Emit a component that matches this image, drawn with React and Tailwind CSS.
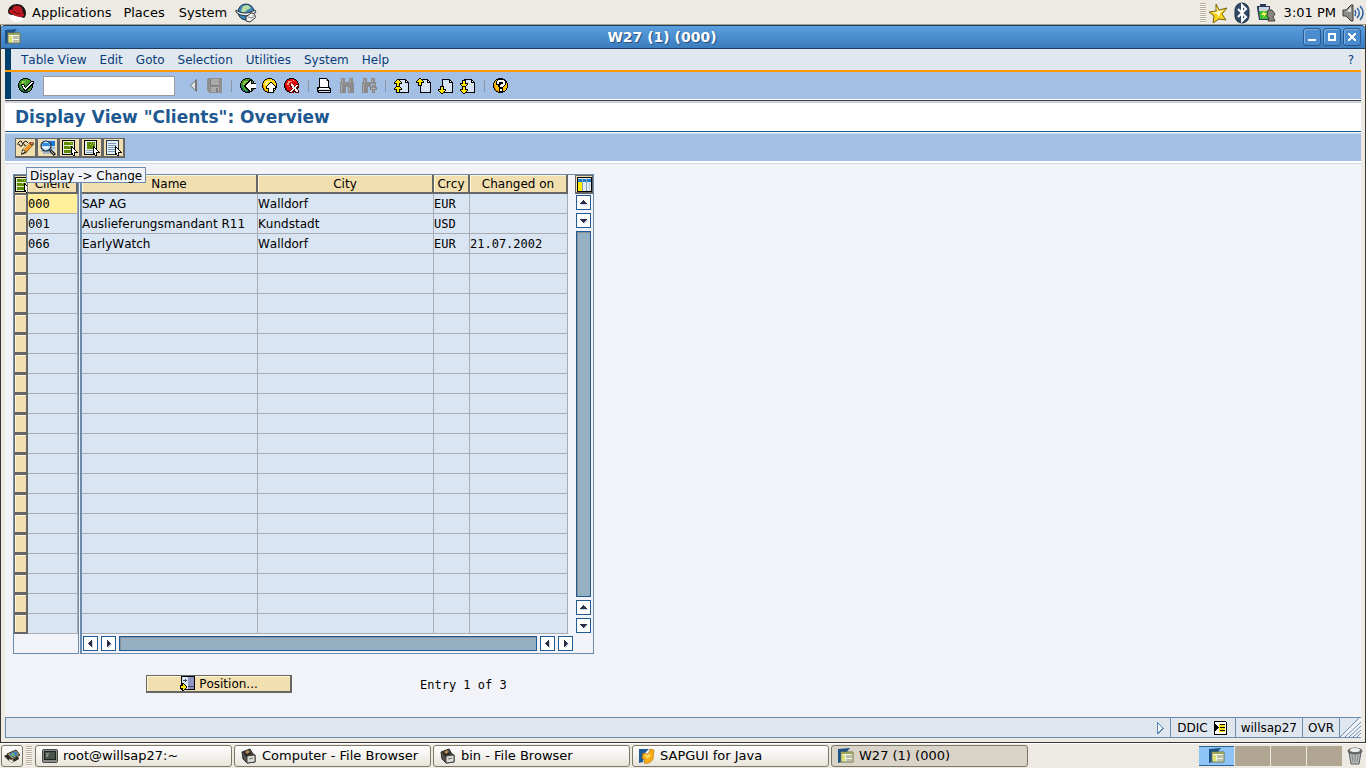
import React from "react";

const clients = [
  { client: "000", name: "SAP AG", city: "Walldorf", crcy: "EUR", changed: "" },
  { client: "001", name: "Auslieferungsmandant R11", city: "Kundstadt", crcy: "USD", changed: "" },
  { client: "066", name: "EarlyWatch", city: "Walldorf", crcy: "EUR", changed: "21.07.2002" },
];

const ROW_COUNT = 22;
const rows = Array.from({ length: ROW_COUNT }, (_, i) => clients[i] || null);

const menus = ["Table View", "Edit", "Goto", "Selection", "Utilities", "System", "Help"];

// Small pixel style drawing, one unit per pixel
const Pix = ({ w = 16, h = 16, children }) => (
  <svg
    width={w}
    height={h}
    viewBox={`0 0 ${w} ${h}`}
    shapeRendering="crispEdges"
    className="shrink-0"
    aria-hidden="true"
  >
    {children}
  </svg>
);

/* ---------- toolbar icons ---------- */

const Ball = ({ fill, shade, light }) => (
  <>
    <path d="M5 0h5v1h2v1h1v1h1v2h1v5h-1v2h-1v1h-1v1h-2v1H5v-1H3v-1H2v-1H1v-2H0V5h1V3h1V2h1V1h2z" fill="#000" />
    <path d="M5 1h5v1h2v1h1v2h1v5h-1v2h-1v1h-2v1H5v-1H3v-1H2v-2H1V5h1V3h1V2h2z" fill={fill} />
    <path d="M1 7h1v3h1v2h2v1h5v1H5v-1H3v-1H2v-2H1z" fill={shade} />
    <path d="M4 3h4v1H6v1H5v2H3V5h1zM9 2h1v1H9zM7 5h1v1H7zM5 8h1v1H5z" fill={light} />
  </>
);

const OkIcon = () => (
  <Pix>
    <Ball fill="#3c9a28" shade="#0b5a50" light="#a5cf4a" />
    <path d="M3 6h3v1h1v2h1V8h1V7h1V6h1V5h1V4h1V3h3v3h-1v1h-1v1h-1v1h-1v1h-1v1h-1v1H9v1H6v-1H5v-2H4V8H3z" fill="#000" />
    <path d="M4 7h2v2h1v1h1V9h1V8h1V7h1V6h1V5h1V4h2v1h-1v1h-1v1h-1v1h-1v1h-1v1H9v1H8v1H7v-1H6v-1H5V8H4z" fill="#fff" />
  </Pix>
);

const BackIcon = () => (
  <Pix>
    <Ball fill="#3c9a28" shade="#14587a" light="#9cc84a" />
    <path d="M9 2h3v3h4v6h-4v3H9v-1H8v-1H7v-1H6v-1H5V9H4V7h1V6h1V5h1V4h1V3h1z" fill="#000" />
    <path d="M10 3h1v3h5v4h-5v3h-1v-1H9v-1H8v-1H7V9H6V8H5h1V7h1V6h1V5h1V4h1z" fill="#fff" />
  </Pix>
);

const ExitIcon = () => (
  <Pix>
    <Ball fill="#ffd400" shade="#e88a00" light="#fff6a8" />
    <path d="M8 4h2v1h1v1h1v1h1v1h1v3h-2v4H6v-4H4V8h1V7h1V6h1V5h1z" fill="#000" />
    <path d="M8 5h2v1h1v1h1v1h1v2h-2v4H7v-4H5V8h1V7h1V6h1z" fill="#fff" />
  </Pix>
);

const CancelIcon = () => (
  <Pix>
    <Ball fill="#e30b0b" shade="#8c0000" light="#ff9c86" />
    <path d="M6 6h4v2h2V6h3v3h-1v1h-1v1h1v1h1v3h-4v-2h-1v2H6v-3h1v-1h1v-1H7V9H6z" fill="#6d0000" />
    <path d="M7 6h2v1h1v2h1V8h1V7h2v1h-1v1h-1v2h1v1h1v2h-2v-1h-1v-2h-1v1H9v1H8v1H6v-1h1v-1h1v-1h1v-1H8V8H7z" fill="#fff" />
  </Pix>
);

const HelpIcon = () => (
  <Pix>
    <Ball fill="#ffc400" shade="#e07800" light="#fff090" />
    <path d="M5 1h6v1h1v1h1v4h-1v1h-1v1h-1v5H6V9H5V7H3V3h1V2h1z" fill="#000" />
    <path d="M5 2h6v1h1v4h-1v1h-1v1H7V7h1V6h2V4H6v2H4V3h1zM7 11h2v2H7z" fill="#fff" />
  </Pix>
);

const SaveIcon = () => (
  <Pix>
    <path d="M1 0h14v15H2v-1H1v-1H0V1h1z" fill="#8f8f8f" />
    <path d="M3 1h9v6H3zM4 9h8v5H4z" fill="#a9a9a9" />
    <path d="M3 7h9v1H3zM9 10h2v4H9zM3 1h1v6H3z" fill="#7d7d7d" />
  </Pix>
);

const PrintIcon = () => (
  <Pix>
    <path d="M2 0h8v1h1v1h1v7h1v1h1v5H1v-1H0V9h2z" fill="#000" />
    <path d="M3 1h6v2h2v6H3zM2 10h10v1H2z" fill="#fff" />
    <path d="M1 11h12v1H1zM2 13h11v1H2z" fill="#d5e1f1" />
    <path d="M9 1h1v2H9z" fill="#9db6d0" />
  </Pix>
);

const FindIcon = ({ plus }) => (
  <Pix>
    <path d="M2 0h4v4h4V0h4v4h1v11H9V9H7v6H1V4h1z" fill="#8c8c8c" />
    <path d="M3 1h1v4H3zM11 1h1v4h-1zM2 6h1v8H2zM10 10h1v4h-1z" fill="#a9a9a9" />
    {plus && <path d="M10 6h4v3h2v7H8V9h2z" fill="#a4bfe4" />}
    {plus && <path d="M11 7h3v2h2v3h-2v3h-3v-3H9V9h2z" fill="#858585" />}
    {plus && <path d="M12 8h1v2h2v1h-2v3h-1v-3h-2v-1h2z" fill="#a9a9a9" />}
  </Pix>
);

const Arrow = ({ x, y, down }) => (
  <g transform={`translate(${x} ${y})${down ? " translate(0 8) scale(1 -1)" : ""}`}>
    <path d="M3 0h2v1h1v1h1v1h1v2H6v3H2V5H0V3h1V2h1V1h1z" fill="#000" />
    <path d="M3 1h2v1h1v1h1v1H5v3H3V4H1V3h1V2h1z" fill="#ffe500" />
  </g>
);

const PageIcon = ({ arrows }) => (
  <Pix>
    <path d="M4 1h8v1h1v1h1v1h1v11H4z" fill="#000" />
    <path d="M5 2h6v3h3v9H5z" fill="#d5e3f4" />
    <path d="M12 3h1v1h-1z" fill="#fff" />
    {arrows.map(([x, y, down], i) => (
      <Arrow key={i} x={x} y={y} down={down} />
    ))}
  </Pix>
);

/* ---------- application toolbar icons ---------- */

const ToggleIcon = () => (
  <svg width="18" height="17" viewBox="0 0 18 17" className="shrink-0" aria-hidden="true">
    <path d="M1 6V4l2-2h1l2 3 1-2 2-1 2 2M2 5l1 2h2l1-2M7 5l1 2h2" fill="none" stroke="#1c1c1c" />
    <path d="M4 16l1-5 8-8h3l1 2-8 9z" fill="#2c2214" />
    <path d="M7 11l6-6 2 2-6 6z" fill="#f5971e" />
    <path d="M6 10l6-6 1 1-6 6z" fill="#ffd27a" />
    <path d="M13 4l1-1h1l1 1v1l-1 1z" fill="#e8705c" />
    <path d="M5 14l1-3 2 2z" fill="#fff" />
  </svg>
);

const DetailIcon = () => (
  <svg width="18" height="17" viewBox="0 0 18 17" className="shrink-0" aria-hidden="true">
    <path d="M4 1h12v13H4z" fill="#d3e2f0" />
    <path d="M4 2h12v5H4z" fill="#1f78d8" />
    <path d="M9 9h7M2 12h10M4 14h12" stroke="#6f8fb0" />
    <circle cx="7" cy="7" r="5" fill="#c3e3f5" stroke="#1c2a3a" strokeWidth="1.2" />
    <path d="M4 4h6l1 3H3z" fill="#2f8be0" />
    <path d="M4 8h5v1H4z" fill="#fff" />
    <path d="M11 11l5 5" stroke="#1c2a3a" strokeWidth="3" />
    <path d="M12 12l3 3" stroke="#e7a45a" />
  </svg>
);

const Cursor = () => (
  <>
    <path d="M9 6h1v1h1v1h1v1h1v1h1v1h1v1h1v1h-3v3h-2v-2h-1v1H9z" fill="#000" />
    <path d="M10 8h1v1h1v1h1v1h1v1h-2v3h-1v-2h-1z" fill="#fff" />
  </>
);

const SelectAllIcon = () => (
  <Pix>
    <path d="M0 0h13v15H0z" fill="#000" />
    <path d="M1 1h11v13H1z" fill="#e8efd8" />
    <path d="M2 2h9v3H2zM2 6h9v3H2zM2 10h9v3H2z" fill="#5c8a00" />
    <path d="M7 2h1v1H7zM9 3h1v1H9zM7 6h1v1H7zM9 7h1v1H9z" fill="#b5d44a" />
    <Cursor />
  </Pix>
);

const SelectBlockIcon = () => (
  <Pix>
    <path d="M0 0h13v15H0z" fill="#000" />
    <path d="M1 1h11v13H1z" fill="#e4ecf4" />
    <path d="M3 2h8v7H3z" fill="#5c8a00" />
    <path d="M7 2h1v1H7zM9 3h1v1H9zM8 5h1v1H8zM6 4h1v1H6z" fill="#b5d44a" />
    <path d="M2 10h7v1H2zM2 12h7v1H2z" fill="#8ba3ba" />
    <Cursor />
  </Pix>
);

const DeselectIcon = () => (
  <Pix>
    <path d="M0 0h13v15H0z" fill="#26384a" />
    <path d="M1 1h11v13H1z" fill="#e4eef8" />
    <path d="M2 3h8v1H2zM2 5h8v1H2zM2 7h7v1H2zM2 9h7v1H2zM2 11h7v1H2z" fill="#7d98b4" />
    <Cursor />
  </Pix>
);

const TableConfigIcon = () => (
  <Pix w={15} h={15}>
    <path d="M0 0h15v15H0z" fill="#000" />
    <path d="M1 1h13v13H1z" fill="#e4ecf4" />
    <path d="M1 2h13v3H1z" fill="#1f7fc9" />
    <path d="M1 5h4v9H1z" fill="#ffea00" />
    <path d="M5 2h1v12H5zM9 2h1v12H9z" fill="#8ba3ba" />
    <path d="M12 5h1v9h-1z" fill="#b7c4d2" />
  </Pix>
);

const PositionIcon = () => (
  <Pix>
    <path d="M2 0h14v14H2z" fill="#000" />
    <path d="M3 1h6v12H3z" fill="#dbe7f6" />
    <path d="M9 1h6v12H9z" fill="#8f93c6" />
    <path d="M4 4h4v1H4zM6 3h1v3H6zM9 10h6v1H9z" fill="#3a4a5a" />
    <path d="M3 7h2v1h1v1h1v1h1v2H7v1H6v1H5v1H3v-2H1V9h2z" fill="#000" />
    <path d="M4 8h1v1h1v1h1v2H6v1H5v1H4v-2H2v-2h2z" fill="#ffe500" />
  </Pix>
);

/* ---------- desktop icons ---------- */

const HatIcon = () => (
  <svg width="20" height="20" viewBox="0 0 20 20" className="shrink-0" aria-hidden="true">
    <circle cx="10" cy="10" r="9" fill="#fff" />
    <path d="M1 9c0-5 4-8 9-8s9 4 9 9c0 3-1 4-2 5L6 12c-3 0-5-1-5-3z" fill="#1d1414" />
    <path d="M6 5c1-3 3-2 5-2 2 0 4 1 4 3l1 4c2 1 1 4-2 4-3 0-6-1-9-3-3-1-4-3-2-4 1-1 3 0 3-2z" fill="#c01822" />
    <path d="M5 7c3 3 7 4 10 3-2 2-8 1-10-3z" fill="#3c0509" />
    <path d="M2 13c3 0 5 1 8 3l5 1c-4 3-11 2-13-4z" fill="#fff" />
  </svg>
);

const GlobeIcon = () => (
  <svg width="22" height="20" viewBox="0 0 22 20" className="shrink-0" aria-hidden="true">
    <circle cx="11" cy="9" r="8" fill="#3c86b8" stroke="#1c3550" />
    <path d="M8 3l5-1 3 3-4 2-3 3-3-2z" fill="#b9dca0" />
    <path d="M1 7c5 4 13 4 19 0l1 2c-6 5-15 5-20 0z" fill="#e9eef2" stroke="#26323e" />
    <path d="M11 14l5-4c3 0 5 2 4 5l-5 4-4-1z" fill="#f0f0ee" stroke="#333" />
    <path d="M13 14l4 1 2-3" fill="none" stroke="#888" />
  </svg>
);

const StarIcon = () => (
  <svg width="20" height="20" viewBox="0 0 20 20" className="shrink-0" aria-hidden="true">
    <path d="M8 1l3 6 8-2-5 6 4 6-7-1-6 4 1-7-5-4 7-1z" fill="#f8d21c" stroke="#7b6416" strokeLinejoin="round" />
    <path d="M8 4l2 5-6 0 5 2 2 3 1-4 4-3-5 1z" fill="#fffbd0" />
  </svg>
);

const BluetoothIcon = () => (
  <svg width="16" height="22" viewBox="0 0 16 22" className="shrink-0" aria-hidden="true">
    <rect x="1" y="1" width="14" height="20" rx="7" fill="#2f4a68" stroke="#1b2b3d" />
    <path d="M4 7l8 8-4 4V3l4 4-8 8" fill="none" stroke="#fff" strokeWidth="2" />
  </svg>
);

const BatteryIcon = () => (
  <svg width="20" height="18" viewBox="0 0 20 18" className="shrink-0" aria-hidden="true">
    <path d="M1 2h3V0h6v2h4v2l-1 12H3L1 4z" fill="#2b3a5c" />
    <path d="M3 5h10l-1 10H4z" fill="#3fbf2c" />
    <path d="M3 3h10v4H3z" fill="#c9d4dc" />
    <path d="M9 6l-4 5h3l-1 3 4-5H8z" fill="#fff36a" />
    <path d="M12 6h4l3 4-2 3 2 4h-7l1-3-2-2z" fill="#8a857c" stroke="#45413b" />
  </svg>
);

const SpeakerIcon = () => (
  <svg width="22" height="18" viewBox="0 0 22 18" className="shrink-0" aria-hidden="true">
    <path d="M1 6h3l5-5h2v16H9l-5-5H1z" fill="#8d8d8a" stroke="#3a3a38" />
    <path d="M3 7h2l4-4v5z" fill="#e2e2df" />
    <path d="M13 6c1 2 1 4 0 6M15 4c3 3 3 7 0 10M18 2c4 4 4 10 0 14" fill="none" stroke="#2f62a5" strokeWidth="1.5" />
  </svg>
);

const SapWindowIcon = () => (
  <svg width="16" height="16" viewBox="0 0 16 16" className="shrink-0" aria-hidden="true">
    <path d="M0 1l12-1-4 5-4 9-4 1z" fill="#1d5287" />
    <path d="M3 4h12v10H3z" fill="#f2f4e4" stroke="#6a7140" />
    <path d="M3 4h12v2H3z" fill="#9aa35a" />
    <path d="M4 7h3v6H4z" fill="#dde36b" />
    <path d="M8 7h6v3H8zM8 11h6v2H8z" fill="#b8c0a8" />
  </svg>
);

const SapGuiIcon = () => (
  <svg width="16" height="16" viewBox="0 0 16 16" className="shrink-0" aria-hidden="true">
    <path d="M0 1h10L6 5l-2 9-4 1z" fill="#1d5a96" />
    <path d="M4 5l4 1 2-1 1-4 4 1-1 9c-2 4-6 5-9 4l1-3-3-2z" fill="#f9ad13" stroke="#b06c00" strokeWidth="0.6" />
    <path d="M5 6l3 1 3-1 1 2-4 3z" fill="#ffd762" />
  </svg>
);

const TerminalIcon = () => (
  <svg width="16" height="16" viewBox="0 0 16 16" className="shrink-0" aria-hidden="true">
    <rect x="0.5" y="1.5" width="15" height="13" rx="1" fill="#8a8c84" stroke="#4a4b46" />
    <rect x="2.5" y="3.5" width="11" height="8" fill="#4a534a" stroke="#1d211d" />
    <path d="M4 6h3M4 8h2" stroke="#b5c2ae" />
  </svg>
);

const CabinetIcon = () => (
  <svg width="16" height="16" viewBox="0 0 16 16" className="shrink-0" aria-hidden="true">
    <path d="M1 4l8-3 3 5 2 1v7l-8 1-4-4z" fill="#55544f" stroke="#2c2c2a" />
    <path d="M2 4l6-2 3 4-6 3z" fill="#2c2721" />
    <path d="M4 4l3-2 2 2-3 2z" fill="#b08950" />
    <path d="M6 8l8-1v7l-8 1z" fill="#deded9" stroke="#44443f" />
    <path d="M8 11l4-1" stroke="#666" />
  </svg>
);

const DesktopIcon = () => (
  <svg width="16" height="16" viewBox="0 0 16 16" className="shrink-0" aria-hidden="true">
    <path d="M0 8l4-2 4 6 6-4 1 3-7 4-3-2z" fill="#2d2b26" />
    <path d="M3 6l9-4 4 5-8 4z" fill="#a69660" stroke="#38331f" />
    <path d="M5 6l7-3 2 4-6 2z" fill="#3b7fc2" />
    <path d="M7 6l3-1 1 2-3 1z" fill="#6fc070" />
    <path d="M5 11l5 2-2 2-3-2z" fill="#e8e4d8" />
  </svg>
);

const TrashIcon = () => (
  <svg width="16" height="18" viewBox="0 0 16 18" className="shrink-0" aria-hidden="true">
    <path d="M2 5h12l-2 12H4z" fill="#b9bcba" stroke="#5a5d5b" />
    <ellipse cx="8" cy="4" rx="7" ry="3" fill="#6b6f6d" stroke="#555856" />
    <ellipse cx="8" cy="3" rx="5" ry="2" fill="#ecefed" />
    <path d="M5 8l1 7M8 8v7M11 8l-1 7" stroke="#80838a" />
  </svg>
);

/* ---------- shared parts ---------- */

const ToolButton = ({ label, children }) => (
  <button type="button" aria-label={label} className="flex shrink-0 items-center justify-center">
    {children}
  </button>
);

const Sep = () => <span className="mx-0.5 h-3 w-px bg-[#8b97a6]" />;

const Grip = () => (
  <span className="h-5 w-1.5 shrink-0 bg-[repeating-linear-gradient(to_bottom,#b8b09c_0px,#b8b09c_1px,#f8f6f2_1px,#f8f6f2_2px)]" />
);

const arrowPaths = {
  up: "M4 2h1v1h1v1h1v1h1v1H1V5h1V4h1V3h1z",
  down: "M1 3h7v1H7v1H6v1H5v1H4V6H3V5H2V4H1z",
  left: "M2 4h1V3h1V2h1V1h1v7H5V7H4V6H3V5H2z",
  right: "M3 1h1v1h1v1h1v1h1v1H6v1H5v1H4v1H3z",
};

const ScrollButton = ({ dir }) => (
  <button
    type="button"
    aria-label={`Scroll ${dir}`}
    className="flex h-[15px] w-[15px] shrink-0 items-center justify-center border border-[#1f5a94] bg-white"
  >
    <Pix w={9} h={9}>
      <path d={arrowPaths[dir]} fill="#c5d6ea" transform="translate(1 1)" />
      <path d={arrowPaths[dir]} fill="#2b2f45" />
    </Pix>
  </button>
);

const HeadCell = ({ children }) => (
  <th
    scope="col"
    className="h-[19px] overflow-hidden border-r-2 border-b-2 border-[#666] bg-[#f2dfaf] pt-px pb-0 text-center font-normal leading-4 shadow-[inset_1px_1px_0_#fff8d8]"
  >
    {children}
  </th>
);

const Cell = ({ mono, selected, children }) => (
  <td
    className={`h-5 whitespace-nowrap border-r border-b border-[#a9adb3] p-0 leading-4 ${
      mono ? "font-['DejaVu_Sans_Mono',monospace]" : ""
    } ${selected ? "bg-[#ffee9a]" : "bg-[#d9e5f3]"}`}
  >
    {children}
  </td>
);

/* ---------- page sections ---------- */

const DesktopPanel = () => (
  <header className="flex h-[25px] items-center border-b border-[#a8a08c] bg-[#edeae3] pt-px text-[13px]">
    <nav className="flex items-center pl-[7px]">
      <button type="button" className="flex items-center gap-[5px]">
        <HatIcon />
        Applications
      </button>
      <button type="button" className="ml-3">Places</button>
      <button type="button" className="ml-[14px]">System</button>
      <button type="button" aria-label="Web browser" className="ml-2">
        <GlobeIcon />
      </button>
    </nav>
    <div className="ml-auto flex items-center gap-1.5 pr-0.5">
      <div className="flex items-center gap-0.5">
        <Grip />
        <StarIcon />
      </div>
      <BluetoothIcon />
      <BatteryIcon />
      <span className="pl-0.5">3:01 PM</span>
      <SpeakerIcon />
    </div>
  </header>
);

const WindowButton = ({ label, children }) => (
  <button
    type="button"
    aria-label={label}
    className="flex h-[18px] w-[18px] items-center justify-center rounded-[3px] border border-[#24588f] bg-[#4a8ccd] shadow-[inset_1px_1px_0_#7fb2e4]"
  >
    <Pix w={10} h={10}>{children}</Pix>
  </button>
);

const TitleBar = () => (
  <div className="flex h-6 items-center rounded-t-[4px] border-t border-b border-[#1c3d63] bg-linear-to-b from-[#5b9fdf] to-[#3b7cbd] px-1">
    <SapWindowIcon />
    <h1 className="flex-1 text-center text-[14px] leading-5 font-bold text-white [text-shadow:1px_1px_0_#24507e]">
      W27 (1) (000)
    </h1>
    <div className="flex gap-0.5">
      <WindowButton label="Minimize">
        <path d="M1 7h8v2H1z" fill="#fff" />
      </WindowButton>
      <WindowButton label="Maximize">
        <path d="M1 1h8v8H1zM3 3v4h4V3z" fill="#fff" fillRule="evenodd" />
      </WindowButton>
      <WindowButton label="Close">
        <path d="M1 1h2v1h1v1h2V2h1V1h2v2H8v1H7v2h1v1h1v2H7V8H6V7H4v1H3v1H1V7h1V6h1V4H2V3H1z" fill="#fff" />
      </WindowButton>
    </div>
  </div>
);

const MenuBar = () => (
  <nav className="flex h-[21px] items-center gap-[13px] bg-[#e0e7ee] pl-[10px] pr-[7px] text-[#0a3c7c]">
    {menus.map((m) => (
      <button key={m} type="button">{m}</button>
    ))}
    <button type="button" aria-label="Help on the application" className="ml-auto">?</button>
  </nav>
);

const StandardToolbar = () => (
  <div className="flex h-[27px] items-center gap-1.5 bg-[#a4bfe4] pl-[7px]">
    <ToolButton label="Enter"><OkIcon /></ToolButton>
    <input
      type="text"
      aria-label="Command"
      className="ml-[3px] h-5 w-[132px] border border-[#9a9a9a] bg-white px-1 outline-none"
    />
    <div className="ml-2 flex items-center gap-[10px]">
      <ToolButton label="Close command field">
        <Pix w={8} h={14}>
          <path d="M7 0v13h1V0zM6 1h1v11H6V11H5v-1H4V9H3V8H2V7H1V6h1V5h1V4h1V3h1V2h1z" fill="#777" />
          <path d="M6 3v7H5V9H4V8H3V7H2V6h1V5h1V4h1V3z" fill="#dfe3e8" />
        </Pix>
      </ToolButton>
      <ToolButton label="Save"><SaveIcon /></ToolButton>
    </div>
    <Sep />
    <ToolButton label="Back"><BackIcon /></ToolButton>
    <ToolButton label="Exit"><ExitIcon /></ToolButton>
    <ToolButton label="Cancel"><CancelIcon /></ToolButton>
    <Sep />
    <ToolButton label="Print"><PrintIcon /></ToolButton>
    <ToolButton label="Find"><FindIcon /></ToolButton>
    <ToolButton label="Find next"><FindIcon plus /></ToolButton>
    <Sep />
    <ToolButton label="First page"><PageIcon arrows={[[0, 7], [0, 1]]} /></ToolButton>
    <ToolButton label="Previous page"><PageIcon arrows={[[0, 0]]} /></ToolButton>
    <ToolButton label="Next page"><PageIcon arrows={[[0, 8, true]]} /></ToolButton>
    <ToolButton label="Last page"><PageIcon arrows={[[0, 2, true], [0, 8, true]]} /></ToolButton>
    <Sep />
    <ToolButton label="Help"><HelpIcon /></ToolButton>
  </div>
);

const appButtons = [
  { label: "Display -> Change", icon: <ToggleIcon /> },
  { label: "Details", icon: <DetailIcon /> },
  { label: "Select all", icon: <SelectAllIcon /> },
  { label: "Select block", icon: <SelectBlockIcon /> },
  { label: "Deselect all", icon: <DeselectIcon /> },
];

const AppToolbar = () => (
  <div className="relative flex h-[27px] items-center bg-[#a4bfe4] pt-px pl-[10px]">
    {appButtons.map((b) => (
      <button
        key={b.label}
        type="button"
        aria-label={b.label}
        className="flex h-5 w-[22px] items-center justify-center border border-r-2 border-b-2 border-[#666] bg-[#f2dfaf]"
      >
        {b.icon}
      </button>
    ))}
    <div
      role="tooltip"
      className="absolute top-[33px] left-[21px] z-10 h-4 border border-[#6a8caf] bg-[#f2f3f8] px-[3px] leading-4 whitespace-nowrap"
    >
      Display -&gt; Change
    </div>
  </div>
);

const ClientTable = () => (
  <div className="flex items-stretch gap-px">
    <div className="border border-[#6a8caf]">
      <table className="w-16 table-fixed border-separate border-spacing-0">
        <colgroup>
          <col className="w-[14px]" />
          <col className="w-[50px]" />
        </colgroup>
        <thead>
          <tr>
            <th className="h-[19px] border border-[#666] bg-[#f2dfaf] p-0">
              <button type="button" aria-label="Select all rows" className="flex w-3 overflow-hidden">
                <SelectAllIcon />
              </button>
            </th>
            <HeadCell>Client</HeadCell>
          </tr>
        </thead>
        <tbody>
          {rows.map((r, i) => (
            <tr key={i}>
              <td className="h-5 p-0">
                <button
                  type="button"
                  aria-label={`Select row ${i + 1}`}
                  className="block h-5 w-[14px] border border-r-2 border-b-2 border-[#666] bg-[#f2dfaf] shadow-[inset_1px_1px_0_#fff8d8]"
                />
              </td>
              <Cell mono selected={i === 0}>{r?.client}</Cell>
            </tr>
          ))}
        </tbody>
      </table>
    </div>

    <div className="flex border border-l-2 border-[#6a8caf]">
      <div className="w-[493px]">
        <table className="w-[486px] table-fixed border-separate border-spacing-0">
          <colgroup>
            <col className="w-44" />
            <col className="w-44" />
            <col className="w-9" />
            <col className="w-[98px]" />
          </colgroup>
          <thead>
            <tr>
              <HeadCell>Name</HeadCell>
              <HeadCell>City</HeadCell>
              <HeadCell>Crcy</HeadCell>
              <HeadCell>Changed on</HeadCell>
            </tr>
          </thead>
          <tbody>
            {rows.map((r, i) => (
              <tr key={i}>
                <Cell>{r?.name}</Cell>
                <Cell>{r?.city}</Cell>
                <Cell mono>{r?.crcy}</Cell>
                <Cell mono>{r?.changed}</Cell>
              </tr>
            ))}
          </tbody>
        </table>
        <div className="flex w-[491px] items-center gap-[3px] py-0.5 pl-px">
          <ScrollButton dir="left" />
          <ScrollButton dir="right" />
          <div className="h-[15px] flex-1 border border-[#1f5a94] bg-[#95b0c2] shadow-[inset_1px_1px_0_#8a8f94]" />
          <ScrollButton dir="left" />
          <ScrollButton dir="right" />
        </div>
      </div>
      <div className="flex w-[18px] flex-col gap-px pb-5">
        <button
          type="button"
          aria-label="Table settings"
          className="flex h-[19px] items-center justify-center border border-b-2 border-[#666] bg-[#f2dfaf]"
        >
          <TableConfigIcon />
        </button>
        <div className="flex flex-1 flex-col gap-[3px] pl-px">
          <ScrollButton dir="up" />
          <ScrollButton dir="down" />
          <div className="w-[15px] flex-1 border border-[#1f5a94] bg-[#95b0c2] shadow-[inset_1px_1px_0_#8a8f94]" />
          <ScrollButton dir="up" />
          <ScrollButton dir="down" />
        </div>
      </div>
    </div>
  </div>
);

const StatusBar = () => (
  <footer className="flex h-[21px] items-stretch border border-r-0 border-[#6a8caf] bg-[#dfe6ee]">
    <div className="flex flex-1 items-center justify-end pr-[5px]">
      <Pix w={8} h={12}>
        <path d="M0 0h1v1h1v1h1v1h1v1h1v1h1v1h1v1H6v1H5v1H4v1H3v1H2v1H0z" fill="#5b86b4" />
        <path d="M1 2h1v1h1v1h1v1h1v2H4v1H3v1H2v1H1z" fill="#eef5fb" />
      </Pix>
    </div>
    <div className="flex items-center gap-1.5 border-l border-[#6a8caf] pr-2 pl-[6px]">
      DDIC
      <Pix w={13} h={14}>
        <path d="M0 0h12v1h1v13H0z" fill="#000" />
        <path d="M1 1h11v12H1z" fill="#fff" />
        <path d="M5 3h6v8H5z" fill="#ffe500" />
        <path d="M1 3h1v1h1v1h1v1h1v1H4v1H3v1H2v1H1zM6 3h5v1H6zM6 6h5v1H6zM6 9h5v1H6z" fill="#000" />
      </Pix>
    </div>
    <div className="flex items-center border-l border-[#6a8caf] px-[5px]">willsap27</div>
    <div className="flex items-center border-l border-[#6a8caf] px-[5px]">OVR</div>
    <div className="flex items-end border-l border-[#6a8caf]">
      <svg width="21" height="19" viewBox="0 0 21 19" aria-hidden="true">
        <path d="M0 19L20 0h1v19z" fill="#f2f3f8" />
        <path d="M0 19L19 0M5 19L21 4M9 19L21 8M13 19l8-7M17 19l4-4" fill="none" stroke="#6a8caf" />
      </svg>
    </div>
  </footer>
);

const tasks = [
  { title: "root@willsap27:~", icon: <TerminalIcon /> },
  { title: "Computer - File Browser", icon: <CabinetIcon /> },
  { title: "bin - File Browser", icon: <CabinetIcon /> },
  { title: "SAPGUI for Java", icon: <SapGuiIcon /> },
  { title: "W27 (1) (000)", icon: <SapWindowIcon />, active: true },
];

const TaskBar = () => (
  <div className="flex h-[25px] items-center gap-0.5 border-t border-white bg-[#edeae3] pl-px text-[13px]">
    <button
      type="button"
      aria-label="Show desktop"
      className="flex h-[22px] w-[22px] shrink-0 items-center justify-center rounded-[3px] border border-[#7d7768] bg-linear-to-b from-white to-[#e8e4dc]"
    >
      <DesktopIcon />
    </button>
    <span className="flex px-px"><Grip /></span>
    {tasks.map((t) => (
      <button
        key={t.title}
        type="button"
        className={`flex h-[22px] w-[197px] min-w-0 items-center gap-[5px] rounded-[3px] border border-[#7d7768] pl-1.5 whitespace-nowrap ${
          t.active ? "bg-[#dad3c8]" : "bg-linear-to-b from-white to-[#e8e4dc]"
        }`}
      >
        {t.icon}
        {t.title}
      </button>
    ))}
    <div className="ml-auto flex shrink-0 items-center gap-px pr-[3px]">
      <button
        type="button"
        aria-label="Workspace 1"
        className="flex h-5 w-[35px] items-center justify-center border-y border-[#2b6298] bg-[#8fc4f6]"
      >
        <SapWindowIcon />
      </button>
      <button type="button" aria-label="Workspace 2" className="h-5 w-[35px] bg-[#b1a692]" />
      <button type="button" aria-label="Workspace 3" className="h-5 w-[35px] bg-[#b1a692]" />
      <button type="button" aria-label="Workspace 4" className="h-5 w-[35px] bg-[#b1a692]" />
      <button type="button" aria-label="Trash" className="ml-1">
        <TrashIcon />
      </button>
    </div>
  </div>
);

export default function App() {
  return (
    <div className="flex min-h-screen flex-col bg-[#edeae3] font-['DejaVu_Sans',sans-serif] text-xs leading-4 text-black">
      <DesktopPanel />
      <main className="flex flex-1 flex-col border-r border-b border-l border-[#3a3634]">
        <TitleBar />
        <div className="flex flex-1 flex-col px-1 pb-1 [font-kerning:none]">
          <div className="border-l-[6px] border-[#003f6b]">
            <MenuBar />
            <div className="-ml-1.5 h-0.5 bg-[#ff9900]" />
            <StandardToolbar />
          </div>
          <div className="h-1 border-t border-b-2 border-t-white border-b-[#cfd2d8] bg-[#3c444e]" />
          <h2 className="bg-white pl-[10px] text-[17px] leading-7 font-bold text-[#205890]">
            Display View "Clients": Overview
          </h2>
          <div className="h-[3px] border-t border-b border-t-[#205890] border-b-[#c9d8ec] bg-white" />
          <AppToolbar />
          <div className="h-[3px] border-b border-[#cbd9ea] bg-white" />
          <section className="flex flex-1 flex-col items-start bg-[#f2f3f8] pt-[10px] pb-6 pl-2">
            <ClientTable />
            <div className="mt-[21px] ml-[133px] flex items-center">
              <button
                type="button"
                className="flex h-[18px] w-[146px] items-center justify-center gap-1 border border-r-2 border-b-2 border-[#666] bg-[#f2dfaf] pt-px shadow-[inset_1px_1px_0_#fff8d8]"
              >
                <PositionIcon />
                Position...
              </button>
              <span className="ml-32 pt-0.5 font-['DejaVu_Sans_Mono',monospace]">Entry 1 of 3</span>
            </div>
          </section>
          <StatusBar />
        </div>
      </main>
      <TaskBar />
    </div>
  );
}
